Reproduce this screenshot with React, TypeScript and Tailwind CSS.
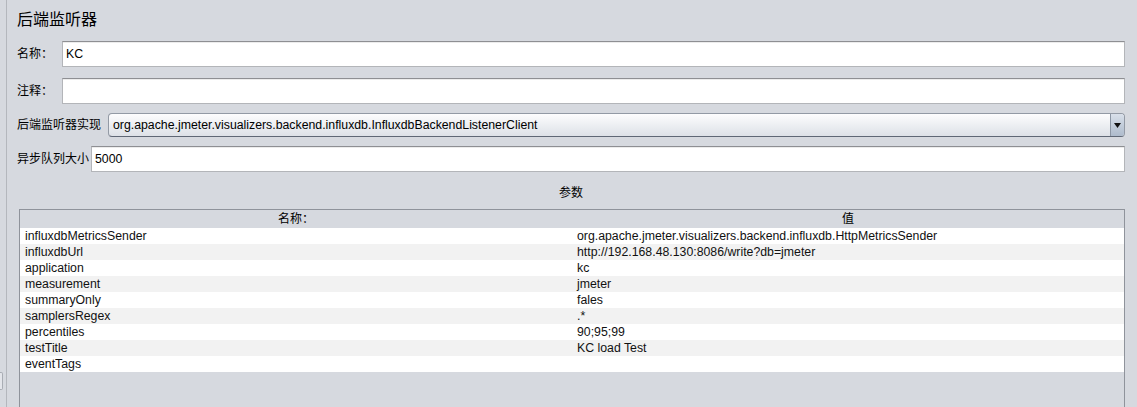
import React from "react"

const params: [string, string][] = [
    ["influxdbMetricsSender", "org.apache.jmeter.visualizers.backend.influxdb.HttpMetricsSender"],
    ["influxdbUrl", "http://192.168.48.130:8086/write?db=jmeter"],
    ["application", "kc"],
    ["measurement", "jmeter"],
    ["summaryOnly", "fales"],
    ["samplersRegex", ".*"],
    ["percentiles", "90;95;99"],
    ["testTitle", "KC load Test"],
    ["eventTags", ""],
]

function TextField({ value, className = "" }: { value?: string; className?: string }) {
    return (
        <div
            className={
                "flex h-[26px] flex-1 items-center border border-[#b3b5b9] border-t-[#8e8f93] bg-white pl-[3px] text-[12.3px] text-black shadow-[inset_0_1px_0_#ececec] " +
                className
            }
        >
            {value}
        </div>
    )
}

export default function App() {
    return (
        <div className="flex h-[407px] w-[1137px] overflow-hidden bg-[#d6d9df] font-['Liberation_Sans','Noto_Sans_CJK_SC',sans-serif] text-black">
            {/* split pane divider */}
            <div className="relative w-[7px] shrink-0 border-r border-[#b4b7bd]">
                <div className="absolute left-0 top-[372px] h-[18px] w-[3px] rounded-r-[2px] border border-l-0 border-[#a9adb4] bg-[#e3e5ea]" />
            </div>

            <div className="flex-1 pl-[10px] pr-[12px]">
                <div className="h-[41px] pt-[8px] text-[16px] leading-[24px]">后端监听器</div>

                <div className="flex h-[26px] items-center">
                    <div className="w-[45px] shrink-0 text-[12px]">名称：</div>
                    <TextField value="KC" />
                </div>

                <div className="mt-[11px] flex h-[26px] items-center">
                    <div className="w-[45px] shrink-0 text-[12px]">注释：</div>
                    <TextField />
                </div>

                <div className="mt-[9px] flex h-[24px] items-center">
                    <div className="w-[91px] shrink-0 text-[12px]">后端监听器实现</div>
                    <div className="flex h-[24px] flex-1 overflow-hidden rounded-[4px] border border-[#939aa5] border-b-[#5f6775] bg-gradient-to-b from-[#fdfdfe] to-[#dde1e7]">
                        <div className="flex flex-1 items-center pl-[4px] text-[12.3px]">
                            org.apache.jmeter.visualizers.backend.influxdb.InfluxdbBackendListenerClient
                        </div>
                        <div className="flex w-[14px] items-center justify-center border-l border-[#8c96a4] bg-gradient-to-b from-[#d9e0ea] to-[#aebbcc]">
                            <svg width="7" height="5" viewBox="0 0 7 5">
                                <path d="M0 0H7L3.5 5Z" fill="#111" />
                            </svg>
                        </div>
                    </div>
                </div>

                <div className="mt-[9px] flex h-[26px] items-center">
                    <div className="w-[74px] shrink-0 text-[12px]">异步队列大小</div>
                    <TextField value="5000" />
                </div>

                <div className="h-[37px] pt-[13px] text-center text-[12px] leading-[16px]">参数</div>

                <div className="ml-[2px] h-[220px] border border-[#8f939b]">
                    <div className="grid h-[18px] grid-cols-2 text-[12px] leading-[18px]">
                        <div className="text-center">名称：</div>
                        <div className="text-center">值</div>
                    </div>
                    {params.map(([name, value], i) => (
                        <div
                            key={name}
                            className={
                                "grid h-[16px] grid-cols-2 text-[12.3px] leading-[16px] text-[#111] " +
                                (i % 2 === 0 ? "bg-white" : "bg-[#f2f2f2]")
                            }
                        >
                            <div className="pl-[5px]">{name}</div>
                            <div className="pl-[5px]">{value}</div>
                        </div>
                    ))}
                </div>
            </div>
        </div>
    )
}
